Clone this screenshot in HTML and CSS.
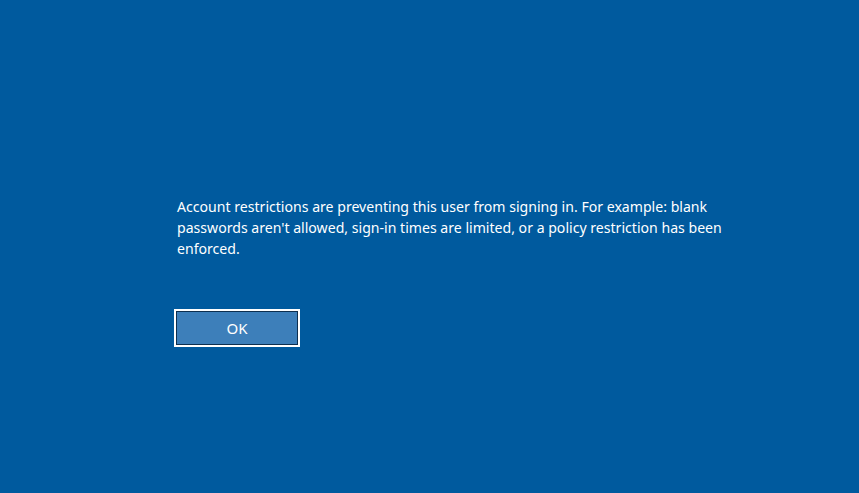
FILE: index.html
```html
<!DOCTYPE html>
<html>
<head>
<meta charset="utf-8">
<link rel="stylesheet" href="styles.css">
</head>
<body>
<main class="screen">
  <section class="dialog">
    <p class="message">Account restrictions are preventing this user from signing in. For example: blank passwords aren't allowed, sign-in times are limited, or a policy restriction has been enforced.</p>
    <button class="ok">OK</button>
  </section>
</main>
</body>
</html>
```
FILE: styles.css
```css
html, body {
  margin: 0;
  padding: 0;
  height: 100%;
  background: #005a9e;
}
.screen {
  height: 100%;
  display: flex;
  flex-direction: column;
  padding: 196px 0 0 177px;
  box-sizing: border-box;
}
.dialog {
  display: flex;
  flex-direction: column;
  align-items: flex-start;
  width: 560px;
}
.message {
  margin: 0;
  color: #ffffff;
  font-family: "Noto Sans", "Open Sans", sans-serif;
  font-size: 14.1px;
  line-height: 21px;
}
.ok {
  margin: 50px 0 0 -3px;
  width: 126px;
  height: 38px;
  box-sizing: border-box;
  border: 2px solid #ffffff;
  box-shadow: inset 0 0 0 1px #0d2f4f;
  background: #3d7fba;
  color: #ffffff;
  font-family: "Noto Sans", "Open Sans", sans-serif;
  font-size: 15px;
  padding: 0;
}
```
